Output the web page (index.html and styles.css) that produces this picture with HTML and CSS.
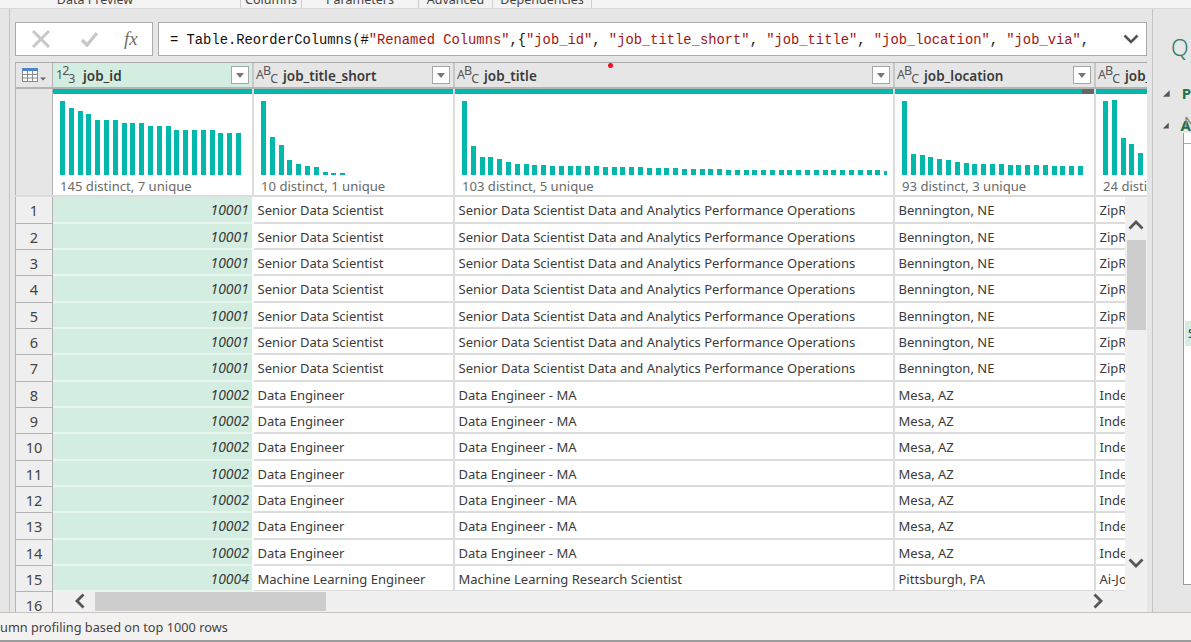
FILE: index.html
```html
<!DOCTYPE html>
<html lang="en">
<head>
  <meta charset="UTF-8" />
  <title>Power Query Editor</title>
  <link rel="stylesheet" href="styles.css">
</head>
<body>

  <!-- Ribbon bottom edge, cut off by the window -->
  <div class="ribbon">
    <span class="tab tab-preview">Data Preview</span>
    <span class="tab tab-columns">Columns</span>
    <span class="tab tab-params">Parameters</span>
    <span class="tab tab-advanced">Advanced</span>
    <span class="tab tab-deps">Dependencies</span>
  </div>

  <div class="workspace">
    <div class="side-strip"></div>

    <main class="editor">
      <!-- Formula bar -->
      <div class="formula-row">
        <div class="formula-btns">
          <svg width="20" height="18" viewBox="0 0 20 18"><path d="M2 1l16 16M18 1L2 17" stroke="#c8c8c8" stroke-width="3" fill="none"/></svg>
          <svg class="check" width="19" height="16" viewBox="0 0 19 16"><path d="M2 9l5 5L17 2" stroke="#c8c8c8" stroke-width="3.4" fill="none"/></svg>
          <span class="fx">fx</span>
        </div>
        <div class="formula-box">
          <span class="formula-text">= Table.ReorderColumns(#<i>"Renamed Columns"</i>,{<i>"job_id"</i>, <i>"job_title_short"</i>, <i>"job_title"</i>, <i>"job_location"</i>, <i>"job_via"</i>,</span>
          <svg width="16" height="10" viewBox="0 0 16 10"><path d="M1.5 1.5L8 8l6.5-6.5" stroke="#555" stroke-width="2.6" fill="none"/></svg>
        </div>
      </div>

      <div class="grid">
        <span class="rec-dot"></span>

        <!-- Column headers -->
        <div class="row head-row">
          <div class="corner">
            <svg width="25" height="14" viewBox="0 0 25 14">
              <rect x="0.5" y="0.5" width="15" height="13" fill="#fff" stroke="#8a8a8a"/>
              <rect x="0" y="0" width="16" height="3" fill="#4a86c8"/>
              <path d="M5.5 3v10M10.5 3v10M1 6.5h14M1 10h14" stroke="#8a8a8a" fill="none"/>
              <path d="M18 9.5h6l-3 3z" fill="#666"/>
            </svg>
          </div>
          <div class="head sel">
            <span class="type"><span>1</span><span class="up">2</span><span class="down">3</span></span>
            <span class="name">job_id</span>
            <span class="filter"></span>
          </div>
          <div class="head">
            <span class="type"><span>A</span><span class="up">B</span><span class="down">C</span></span>
            <span class="name">job_title_short</span>
            <span class="filter"></span>
          </div>
          <div class="head">
            <span class="type"><span>A</span><span class="up">B</span><span class="down">C</span></span>
            <span class="name">job_title</span>
            <span class="filter"></span>
          </div>
          <div class="head">
            <span class="type"><span>A</span><span class="up">B</span><span class="down">C</span></span>
            <span class="name">job_location</span>
            <span class="filter"></span>
          </div>
          <div class="head">
            <span class="type"><span>A</span><span class="up">B</span><span class="down">C</span></span>
            <span class="name">job_via</span>
          </div>
        </div>

        <!-- Column distribution -->
        <div class="row profile-row">
          <div class="corner-low"></div>
          <div class="profile">
            <div class="quality"></div>
            <div class="bars">
              <b style="height:74px"></b><b style="height:67px"></b><b style="height:64px"></b><b style="height:61px"></b><b style="height:55px"></b><b style="height:55px"></b><b style="height:55px"></b><b style="height:52px"></b><b style="height:52px"></b><b style="height:52px"></b><b style="height:49px"></b><b style="height:49px"></b><b style="height:49px"></b><b style="height:45px"></b><b style="height:45px"></b><b style="height:45px"></b><b style="height:45px"></b><b style="height:45px"></b><b style="height:42px"></b><b style="height:42px"></b><b style="height:42px"></b>
            </div>
            <div class="distinct">145 distinct, 7 unique</div>
          </div>
          <div class="profile">
            <div class="quality"></div>
            <div class="bars">
              <b style="height:74px"></b><b style="height:38px"></b><b style="height:30px"></b><b style="height:15px"></b><b style="height:11px"></b><b style="height:9px"></b><b style="height:8px"></b><b style="height:3px"></b><b style="height:2px"></b><b style="height:2px"></b>
            </div>
            <div class="distinct">10 distinct, 1 unique</div>
          </div>
          <div class="profile">
            <div class="quality"></div>
            <div class="bars">
              <b style="height:74px"></b><b style="height:29px"></b><b style="height:18px"></b><b style="height:18px"></b><b style="height:16px"></b><b style="height:13px"></b><b style="height:11px"></b><b style="height:11px"></b><b style="height:10px"></b><b style="height:10px"></b><b style="height:9px"></b><b style="height:9px"></b><b style="height:9px"></b><b style="height:9px"></b><b style="height:9px"></b><b style="height:9px"></b><b style="height:8px"></b><b style="height:8px"></b><b style="height:8px"></b><b style="height:8px"></b><b style="height:8px"></b><b style="height:7px"></b><b style="height:7px"></b><b style="height:7px"></b><b style="height:7px"></b><b style="height:6px"></b><b style="height:6px"></b><b style="height:6px"></b><b style="height:6px"></b><b style="height:6px"></b><b style="height:5px"></b><b style="height:5px"></b><b style="height:5px"></b><b style="height:5px"></b><b style="height:5px"></b><b style="height:5px"></b><b style="height:5px"></b><b style="height:5px"></b><b style="height:5px"></b><b style="height:5px"></b><b style="height:5px"></b><b style="height:5px"></b><b style="height:5px"></b><b style="height:5px"></b><b style="height:5px"></b><b style="height:5px"></b><b style="height:5px"></b><b style="height:5px"></b><b class="thin" style="height:4px"></b>
            </div>
            <div class="distinct">103 distinct, 5 unique</div>
          </div>
          <div class="profile">
            <div class="quality"><span class="errors"></span></div>
            <div class="bars">
              <b style="height:74px"></b><b style="height:21px"></b><b style="height:20px"></b><b style="height:18px"></b><b style="height:16px"></b><b style="height:15px"></b><b style="height:13px"></b><b style="height:12px"></b><b style="height:11px"></b><b style="height:11px"></b><b style="height:11px"></b><b style="height:11px"></b><b style="height:10px"></b><b style="height:10px"></b><b style="height:10px"></b><b style="height:10px"></b><b style="height:10px"></b><b style="height:9px"></b><b style="height:9px"></b><b style="height:9px"></b><b style="height:9px"></b>
            </div>
            <div class="distinct">93 distinct, 3 unique</div>
          </div>
          <div class="profile">
            <div class="quality"></div>
            <div class="bars">
              <b style="height:74px"></b><b style="height:75px"></b><b style="height:37px"></b><b style="height:31px"></b><b style="height:22px"></b>
            </div>
            <div class="distinct">24 distinct, 3 unique</div>
          </div>
        </div>

        <!-- Data rows -->
        <div class="data">
          <div class="row"><div class="num">1</div><div class="cell id">10001</div><div class="cell">Senior Data Scientist</div><div class="cell">Senior Data Scientist Data and Analytics Performance Operations</div><div class="cell">Bennington, NE</div><div class="cell">ZipRecruiter</div></div>
          <div class="row"><div class="num">2</div><div class="cell id">10001</div><div class="cell">Senior Data Scientist</div><div class="cell">Senior Data Scientist Data and Analytics Performance Operations</div><div class="cell">Bennington, NE</div><div class="cell">ZipRecruiter</div></div>
          <div class="row"><div class="num">3</div><div class="cell id">10001</div><div class="cell">Senior Data Scientist</div><div class="cell">Senior Data Scientist Data and Analytics Performance Operations</div><div class="cell">Bennington, NE</div><div class="cell">ZipRecruiter</div></div>
          <div class="row"><div class="num">4</div><div class="cell id">10001</div><div class="cell">Senior Data Scientist</div><div class="cell">Senior Data Scientist Data and Analytics Performance Operations</div><div class="cell">Bennington, NE</div><div class="cell">ZipRecruiter</div></div>
          <div class="row"><div class="num">5</div><div class="cell id">10001</div><div class="cell">Senior Data Scientist</div><div class="cell">Senior Data Scientist Data and Analytics Performance Operations</div><div class="cell">Bennington, NE</div><div class="cell">ZipRecruiter</div></div>
          <div class="row"><div class="num">6</div><div class="cell id">10001</div><div class="cell">Senior Data Scientist</div><div class="cell">Senior Data Scientist Data and Analytics Performance Operations</div><div class="cell">Bennington, NE</div><div class="cell">ZipRecruiter</div></div>
          <div class="row"><div class="num">7</div><div class="cell id">10001</div><div class="cell">Senior Data Scientist</div><div class="cell">Senior Data Scientist Data and Analytics Performance Operations</div><div class="cell">Bennington, NE</div><div class="cell">ZipRecruiter</div></div>
          <div class="row"><div class="num">8</div><div class="cell id">10002</div><div class="cell">Data Engineer</div><div class="cell">Data Engineer - MA</div><div class="cell">Mesa, AZ</div><div class="cell">Indeed</div></div>
          <div class="row"><div class="num">9</div><div class="cell id">10002</div><div class="cell">Data Engineer</div><div class="cell">Data Engineer - MA</div><div class="cell">Mesa, AZ</div><div class="cell">Indeed</div></div>
          <div class="row"><div class="num">10</div><div class="cell id">10002</div><div class="cell">Data Engineer</div><div class="cell">Data Engineer - MA</div><div class="cell">Mesa, AZ</div><div class="cell">Indeed</div></div>
          <div class="row"><div class="num">11</div><div class="cell id">10002</div><div class="cell">Data Engineer</div><div class="cell">Data Engineer - MA</div><div class="cell">Mesa, AZ</div><div class="cell">Indeed</div></div>
          <div class="row"><div class="num">12</div><div class="cell id">10002</div><div class="cell">Data Engineer</div><div class="cell">Data Engineer - MA</div><div class="cell">Mesa, AZ</div><div class="cell">Indeed</div></div>
          <div class="row"><div class="num">13</div><div class="cell id">10002</div><div class="cell">Data Engineer</div><div class="cell">Data Engineer - MA</div><div class="cell">Mesa, AZ</div><div class="cell">Indeed</div></div>
          <div class="row"><div class="num">14</div><div class="cell id">10002</div><div class="cell">Data Engineer</div><div class="cell">Data Engineer - MA</div><div class="cell">Mesa, AZ</div><div class="cell">Indeed</div></div>
          <div class="row"><div class="num">15</div><div class="cell id">10004</div><div class="cell">Machine Learning Engineer</div><div class="cell">Machine Learning Research Scientist</div><div class="cell">Pittsburgh, PA</div><div class="cell">Ai-Jobs.net</div></div>
          <div class="row"><div class="num">16</div><div class="cell id"></div><div class="cell"></div><div class="cell"></div><div class="cell"></div><div class="cell"></div></div>

          <!-- Scrollbars sit over the rows -->
          <div class="vscroll">
            <svg class="arrow-up" width="16" height="10" viewBox="0 0 16 10"><path d="M1.5 8.5L8 2l6.5 6.5" stroke="#555" stroke-width="2.8" fill="none"/></svg>
            <div class="vthumb"></div>
            <svg class="arrow-down" width="16" height="10" viewBox="0 0 16 10"><path d="M1.5 1.5L8 8l6.5-6.5" stroke="#555" stroke-width="2.8" fill="none"/></svg>
          </div>
          <div class="hscroll">
            <svg class="arrow-left" width="10" height="16" viewBox="0 0 10 16"><path d="M8.5 1.5L2 8l6.5 6.5" stroke="#555" stroke-width="2.8" fill="none"/></svg>
            <div class="hthumb"></div>
            <svg class="arrow-right" width="10" height="16" viewBox="0 0 10 16"><path d="M1.5 1.5L8 8l-6.5 6.5" stroke="#555" stroke-width="2.8" fill="none"/></svg>
          </div>
        </div>
      </div>
    </main>

    <!-- Query settings, mostly outside the window -->
    <aside class="settings">
      <div class="settings-title">Q</div>
      <div class="section section-props">
        <svg width="9" height="9" viewBox="0 0 9 9"><path d="M8 1v7H1z" fill="#555"/></svg>
        <span class="section-name">P</span>
      </div>
      <div class="field-name">N</div>
      <div class="section section-steps">
        <svg width="9" height="9" viewBox="0 0 9 9"><path d="M8 1v7H1z" fill="#555"/></svg>
        <span class="section-name">A</span>
      </div>
      <div class="steps">
        <div class="steps-top"></div>
        <div class="step-selected">S</div>
      </div>
    </aside>
  </div>

  <div class="status">umn profiling based on top 1000 rows</div>

</body>
</html>
```

FILE: styles.css
```css
html, body {
  margin: 0;
  height: 642px;
  overflow: hidden;
}

body {
  font-family: "Noto Sans", "Open Sans", sans-serif;
  font-size: 13px;
  color: #3b3b3b;
  background: #e6e6e6;
  display: flex;
  flex-direction: column;
}

/* Ribbon */
.ribbon {
  height: 8px;
  flex: none;
  display: flex;
  background: #f3f3f3;
  border-bottom: 1px solid #d8d8d8;
  overflow: hidden;
}

.tab {
  box-sizing: border-box;
  height: 8px;
  font-size: 12.5px;
  line-height: 0;
  border-right: 1px solid #d0d0d0;
  color: #444;
  white-space: nowrap;
  text-align: center;
}

.tab-preview { width: 241px; padding-right: 50px; }
.tab-columns { width: 61px; }
.tab-params { width: 117px; }
.tab-advanced { width: 74px; }
.tab-deps { width: 99px; }

/* Main area */
.workspace {
  height: 603px;
  flex: none;
  display: flex;
}

.side-strip {
  width: 9px;
  flex: none;
  border-right: 1px solid #c4c4c4;
}

.editor {
  width: 1142px;
  flex: none;
  padding: 13px 5px 0;
  box-sizing: border-box;
  display: flex;
  flex-direction: column;
  gap: 6px;
}

/* Formula bar */
.formula-row {
  display: flex;
  gap: 5px;
  height: 34px;
  flex: none;
}

.formula-btns {
  width: 138px;
  box-sizing: border-box;
  background: #fff;
  border: 1px solid #ababab;
  display: flex;
  align-items: center;
  padding-left: 15px;
}

.check { margin-left: 29px; }

.fx {
  font-family: "Liberation Serif", serif;
  font-style: italic;
  font-size: 19px;
  color: #707070;
  margin-left: 25px;
}

.formula-box {
  flex: 1;
  background: #fff;
  border: 1px solid #ababab;
  display: flex;
  align-items: center;
  justify-content: space-between;
  padding: 0 7px 0 11px;
}

.formula-text {
  font-family: "Liberation Mono", monospace;
  font-size: 13.8px;
  line-height: 18px;
  padding-top: 4px;
  color: #111;
  white-space: pre;
}

.formula-text i {
  font-style: normal;
  color: #a31515;
}

/* Table */
.grid {
  position: relative;
  height: 550px;
  flex: none;
  overflow: hidden;
}

.rec-dot {
  position: absolute;
  left: 593px;
  top: 1px;
  width: 5px;
  height: 5px;
  border-radius: 50%;
  background: #e81123;
  z-index: 2;
}

.row {
  display: grid;
  grid-template-columns: 38px 201px 201px 440px 201px 1fr;
  width: 1132px;
}

.data .row {
  width: 1110px;
  height: 26.33px;
}

.head-row {
  height: 27px;
  box-sizing: border-box;
  border-top: 1px solid #ababab;
  border-bottom: 2px solid #b4b4b4;
}

.corner {
  background: #e6e6e6;
  border-left: 1px solid #b4b4b4;
  border-right: 1px solid #b4b4b4;
  display: flex;
  align-items: center;
  padding-left: 6px;
}

.head {
  background: #e6e6e6;
  border-right: 2px solid #c8c8c8;
  display: flex;
  align-items: center;
  padding-left: 2px;
  overflow: hidden;
  min-width: 0;
}

.head:last-child { border-right: none; }

.head.sel { background: #d3eee0; padding-left: 3px; }

.type {
  width: 23px;
  flex: none;
  font-size: 12.5px;
  letter-spacing: -1px;
  line-height: 1;
  padding-top: 1px;
  color: #555;
  display: flex;
}

.type .up { transform: translateY(-4px); }
.type .down { transform: translateY(4px); }

.name {
  margin-left: 4px;
  padding-top: 2px;
  font-weight: 600;
  font-size: 13.5px;
  color: #3b3b3b;
  white-space: nowrap;
}

.filter {
  width: 18px;
  height: 18px;
  box-sizing: border-box;
  margin-left: auto;
  margin-right: 3px;
  background: #fff;
  border: 1px solid #a6a6a6;
  display: flex;
  align-items: center;
  justify-content: center;
}

.filter::after {
  content: "";
  border-left: 4.5px solid transparent;
  border-right: 4.5px solid transparent;
  border-top: 5px solid #777;
}

/* Distribution row */
.profile-row {
  height: 108px;
  box-sizing: border-box;
  border-bottom: 2px solid #dcdcdc;
}

.corner-low {
  background: #e6e6e6;
  border-left: 1px solid #b4b4b4;
  border-right: 1px solid #b4b4b4;
}

.profile {
  background: #fff;
  border-right: 2px solid #dcdcdc;
  overflow: hidden;
  min-width: 0;
}

.profile:last-child { border-right: none; }

.quality {
  height: 5px;
  background: #01b8aa;
  display: flex;
  justify-content: flex-end;
}

.errors {
  width: 12px;
  background: #666;
}

.bars {
  height: 75px;
  margin-top: 6px;
  padding-left: 7px;
  display: flex;
  align-items: flex-end;
  gap: 3.8px;
}

.bars b {
  display: block;
  width: 5px;
  flex: none;
  background: #01b8aa;
}

.bars b.thin { width: 3px; }

.distinct {
  margin-top: 3px;
  padding-left: 7px;
  font-size: 13.1px;
  line-height: 16px;
  color: #6a6a6a;
  white-space: nowrap;
}

/* Data rows */
.data {
  position: relative;
  box-sizing: border-box;
  height: 415px;
  padding-top: 0.3px;
  overflow: hidden;
  background: #fff;
}

.num {
  box-sizing: border-box;
  background: #efefef;
  border-left: 1px solid #b4b4b4;
  border-right: 1px solid #b4b4b4;
  border-bottom: 1px solid #b4b4b4;
  padding-top: 1px;
  font-size: 14.5px;
  color: #444;
  display: flex;
  align-items: center;
  justify-content: center;
}

.cell {
  box-sizing: border-box;
  background: #fff;
  border-right: 2px solid #dcdcdc;
  border-bottom: 2px solid #dcdcdc;
  padding: 0 3px 0 3.5px;
  font-size: 13.03px;
  line-height: 26px;
  white-space: nowrap;
  overflow: hidden;
  min-width: 0;
}

.cell:last-child { border-right: none; }

.cell.id {
  background: #d3eee0;
  text-align: right;
  font-style: italic;
  font-size: 14px;
  border-color: #e8f5ee;
  border-right-color: #fff;
}

.vscroll {
  position: absolute;
  right: 0;
  top: 0;
  bottom: 21px;
  width: 22px;
  background: #f0f0f0;
}

.arrow-up {
  position: absolute;
  left: 3px;
  top: 23px;
}

.vthumb {
  position: absolute;
  left: 2px;
  top: 43px;
  width: 19px;
  height: 90px;
  background: #cdcdcd;
}

.arrow-down {
  position: absolute;
  left: 3px;
  top: 361px;
}

.hscroll {
  position: absolute;
  left: 38px;
  right: 0;
  bottom: 0;
  height: 21px;
  background: #f0f0f0;
}

.arrow-left {
  position: absolute;
  left: 22px;
  top: 2px;
}

.hthumb {
  position: absolute;
  left: 42px;
  top: 1px;
  width: 231px;
  height: 19px;
  background: #cdcdcd;
}

.arrow-right {
  position: absolute;
  left: 1040px;
  top: 2px;
}

/* Query settings */
.settings {
  flex: 1;
  min-width: 0;
  border-left: 1px solid #c4c4c4;
  padding-top: 24px;
  overflow: hidden;
  position: relative;
}

.settings-title {
  margin-left: 18px;
  font-size: 23px;
  font-weight: 300;
  line-height: 28px;
  color: #2d7d6b;
}

.section {
  display: flex;
  align-items: center;
  gap: 11px;
  margin-left: 9px;
  white-space: nowrap;
}

.section-props { margin-top: 23px; }
.section-steps { margin-top: 14px; }

.section-name {
  font-size: 15px;
  font-weight: 700;
  line-height: 18px;
  color: #217346;
}

.field-name {
  position: absolute;
  left: 31px;
  top: 102px;
  font-size: 15px;
  color: #8a7a6a;
}

.steps {
  box-sizing: border-box;
  margin-top: -1px;
  margin-left: 30px;
  height: 452px;
  background: #fff;
  border-left: 1px solid #9a9a9a;
  border-bottom: 1px solid #9a9a9a;
}

.steps-top {
  height: 10px;
  margin-bottom: 177px;
  border-bottom: 1px solid #ababab;
}

.step-selected {
  height: 25px;
  margin-left: 1px;
  padding-left: 3px;
  line-height: 25px;
  background: #d3eee0;
}

/* Status bar */
.status {
  box-sizing: border-box;
  height: 30px;
  flex: none;
  background: #f3f2f1;
  border-top: 1px solid #c4c4c4;
  border-bottom: 2px solid #9c9c9c;
  font-size: 12.75px;
  line-height: 28px;
  white-space: nowrap;
  color: #444;
}
```
